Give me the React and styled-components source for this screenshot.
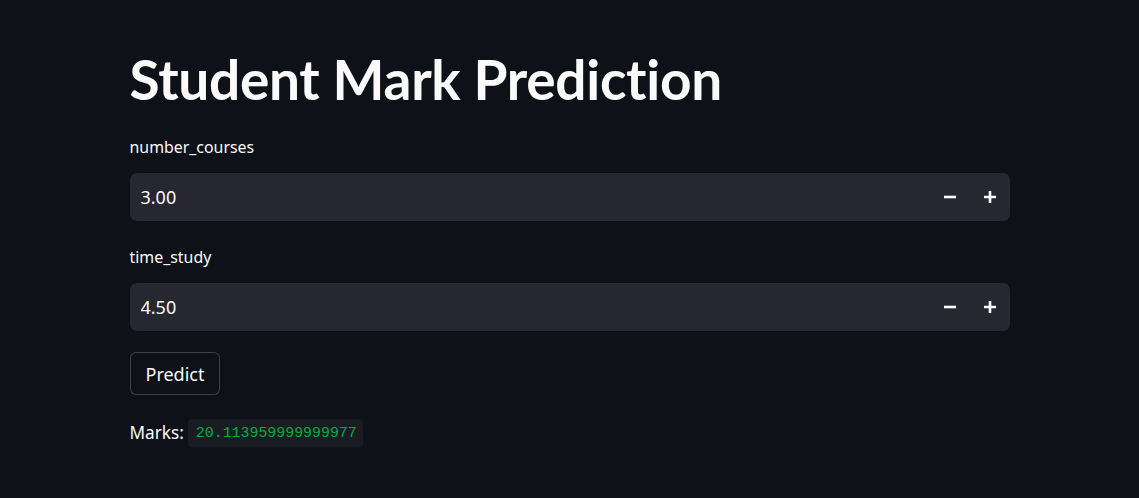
import React, { useState } from 'react';
import styled, { createGlobalStyle } from 'styled-components';

const GlobalStyle = createGlobalStyle`
  html, body {
    margin: 0;
    padding: 0;
    background: #0e1117;
  }
  body {
    font-family: 'Noto Sans', 'Open Sans', sans-serif;
    color: #fafafa;
  }
`;

const Page = styled.div`
  min-height: 498px;
  background: #0e1117;
`;

const Main = styled.main`
  width: 880px;
  margin: 0 auto;
  padding-top: 47px;
  display: flex;
  flex-direction: column;
`;

const Title = styled.h1`
  margin: 0;
  font-family: 'Lato', 'Noto Sans', sans-serif;
  font-weight: 700;
  font-size: 55px;
  line-height: 64px;
  letter-spacing: -0.3px;
  color: #fafafa;
`;

const Field = styled.div`
  display: flex;
  flex-direction: column;
  margin-top: ${p => p.$top}px;
`;

const Label = styled.label`
  font-size: 15.9px;
  line-height: 20px;
  color: #fafafa;
  margin-bottom: 16px;
`;

const InputBox = styled.div`
  display: flex;
  align-items: center;
  height: 48px;
  background: #262730;
  border-radius: 7px;
  padding-left: 11px;
`;

const NumInput = styled.input`
  flex: 1;
  background: transparent;
  border: none;
  outline: none;
  color: #fafafa;
  font-family: 'Noto Sans', 'Open Sans', sans-serif;
  font-size: 18px;
  padding: 0;
`;

const StepButton = styled.button`
  width: 40px;
  height: 48px;
  display: flex;
  align-items: center;
  justify-content: center;
  background: transparent;
  border: none;
  padding: 0;
  cursor: pointer;
  color: #fafafa;
`;

const Button = styled.button`
  align-self: flex-start;
  margin-top: 21px;
  height: 43px;
  padding: 0 15px;
  background: #0e1117;
  color: #fafafa;
  border: 1px solid rgba(250, 250, 250, 0.2);
  border-radius: 6px;
  font-family: 'Noto Sans', 'Open Sans', sans-serif;
  font-size: 18px;
  cursor: pointer;
`;

const Result = styled.p`
  margin: 24px 0 0;
  display: flex;
  align-items: center;
  gap: 4px;
  font-size: 17.2px;
  line-height: 24px;
`;

const Code = styled.code`
  font-family: 'Liberation Mono', 'DejaVu Sans Mono', monospace;
  font-size: 14.9px;
  color: #09ab3b;
  background: #1a1c24;
  border-radius: 4px;
  padding: 2px 6px 2px 8px;
`;

const Minus = () => (
  <svg width="14" height="14" viewBox="0 0 14 14">
    <path d="M1 7h12" stroke="currentColor" strokeWidth="2.6" />
  </svg>
);

const Plus = () => (
  <svg width="14" height="14" viewBox="0 0 14 14">
    <path d="M1 7h12M7 1v12" stroke="currentColor" strokeWidth="2.6" />
  </svg>
);

const NumberField = ({ label, value, step, onChange, top }) => (
  <Field $top={top}>
    <Label>{label}</Label>
    <InputBox>
      <NumInput
        type="text"
        value={value.toFixed(2)}
        onChange={e => onChange(parseFloat(e.target.value) || 0)}
      />
      <StepButton onClick={() => onChange(value - step)}>
        <Minus />
      </StepButton>
      <StepButton onClick={() => onChange(value + step)}>
        <Plus />
      </StepButton>
    </InputBox>
  </Field>
);

const App = () => {
  const [courses, setCourses] = useState(3);
  const [study, setStudy] = useState(4.5);

  return (
    <Page>
      <GlobalStyle />
      <Main>
        <Title>Student Mark Prediction</Title>
        <NumberField
          label="number_courses"
          value={courses}
          step={0.01}
          onChange={setCourses}
          top={26}
        />
        <NumberField
          label="time_study"
          value={study}
          step={0.01}
          onChange={setStudy}
          top={26}
        />
        <Button>Predict</Button>
        <Result>
          Marks: <Code>20.113959999999977</Code>
        </Result>
      </Main>
    </Page>
  );
};

export default App;
